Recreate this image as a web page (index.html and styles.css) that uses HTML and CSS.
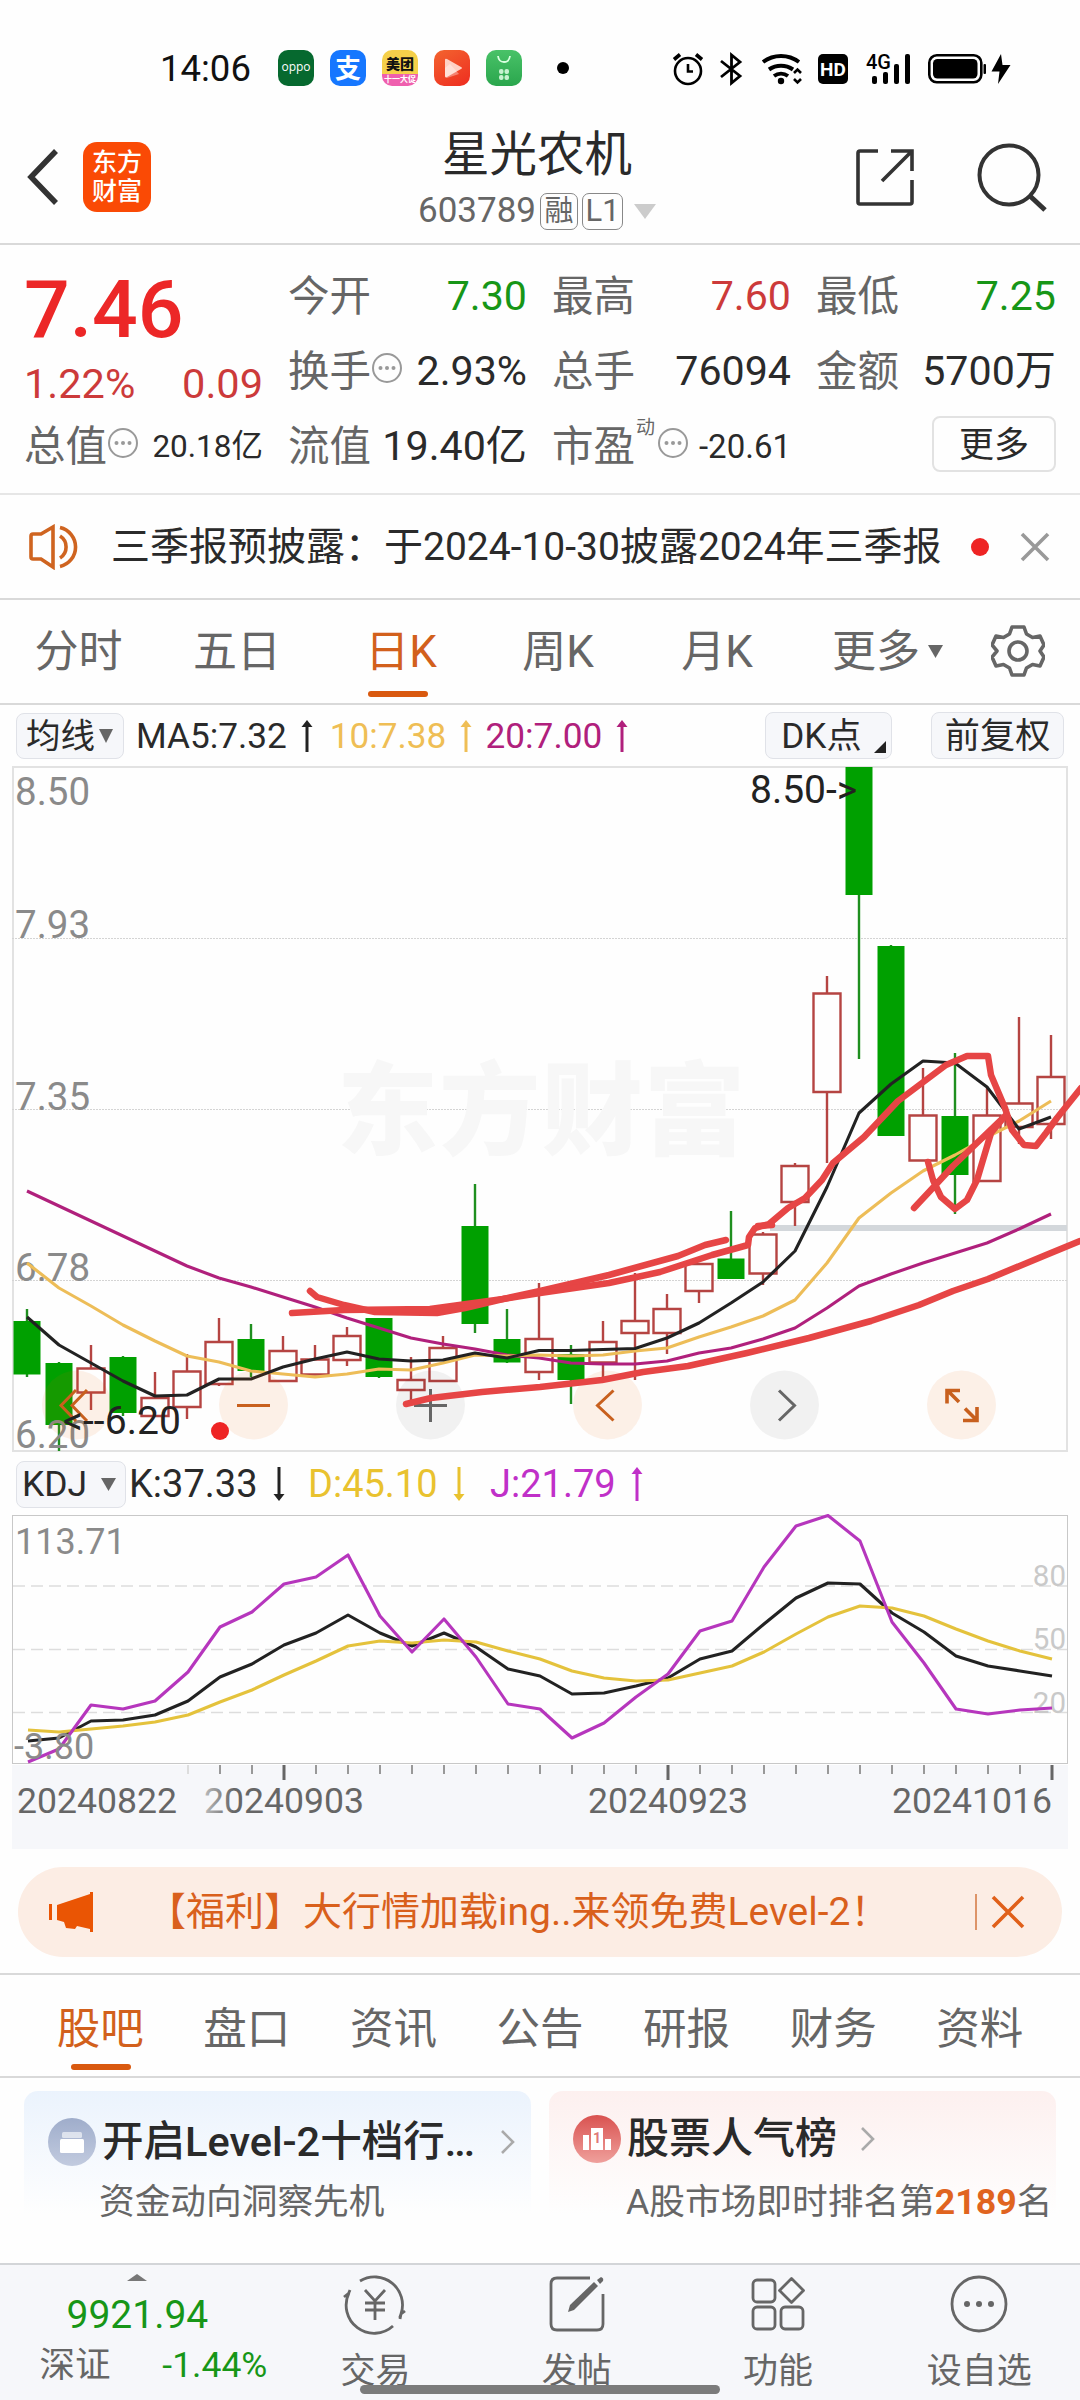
FILE: index.html
```html
<!DOCTYPE html>
<html lang="zh-CN">
<head>
<meta charset="utf-8">
<title>星光农机 603789</title>
<link rel="stylesheet" href="styles.css">
</head>
<body>
<div class="status">
  <span class="clock">14:06</span>
  <div class="apps">
    <span class="app app-oppo">oppo</span>
    <span class="app app-pay">支</span>
    <span class="app app-mt"><b>美团</b><i>十一大促</i></span>
    <span class="app app-video"><svg width="36" height="36" viewBox="0 0 36 36"><path d="M11 10v16q0 2 2 1l14-8q2-1 0-2l-14-8q-2-1-2 1z" fill="#ffd0c4"/><path d="M11 18l5-4 9 10-12 4q-2 0-2-2z" fill="#fff" opacity=".35"/></svg></span>
    <span class="app app-shop"><svg width="36" height="36" viewBox="0 0 36 36"><path d="M12 6c1 8 11 8 12 0" fill="none" stroke="#d9ffe0" stroke-width="1.8"/><g fill="#c5f3cf"><rect x="13" y="19" width="4.5" height="5" rx="2"/><rect x="18.500" y="19" width="4.500" height="5" rx="2"/><rect x="13" y="25" width="4.500" height="5" rx="2"/><rect x="18.500" y="25" width="4.500" height="5" rx="2"/></g></svg></span>
  </div>
  <span class="dot-black"></span>
  <svg class="sys" width="345" height="40" viewBox="672 49 345 40">
    <g fill="none" stroke="#000" stroke-width="2.6">
      <circle cx="688" cy="71" r="13"/><path d="M688 64v7.500h5"/><path d="M674 59.500l6-5M702 59.500l-6-5" stroke-width="3.600"/>
      <path d="M721 61l19 15-8.500 7V55l8.500 7-19 15" stroke-width="2.800"/>
      <path d="M763 62a30 30 0 0 1 36 0" stroke-width="4"/><path d="M769 69.500a21 21 0 0 1 24 0" stroke-width="4"/><path d="M774 76a12 12 0 0 1 14 0" stroke-width="4"/>
      <path d="M794 73l3.500-3.500 3.500 3.500M794 79l3.500 3.500 3.500-3.500"/>
      <rect x="929.300" y="55.300" width="52" height="27" rx="7.500"/>
    </g>
    <circle cx="781" cy="81" r="3.200"/>
    <rect x="818" y="54" width="30" height="30" rx="5"/>
    <text class="hd" x="833" y="76" text-anchor="middle">HD</text>
    <text class="g4" x="866" y="69">4G</text>
    <rect x="872" y="76" width="5" height="8" rx="2"/><rect x="883" y="72" width="5" height="12" rx="2"/><rect x="894" y="64" width="5" height="20" rx="2"/><rect x="905" y="54" width="5" height="30" rx="2"/>
    <rect x="933" y="59" width="44.500" height="19.500" rx="4.500"/><rect x="983.500" y="64" width="2.500" height="10" rx="1"/>
    <path d="M1001 54l-9.500 17.500h8l-1.500 12.500 12.500-19h-8z"/>
  </svg>
</div>

<header class="head">
  <svg class="back" width="34" height="58" viewBox="0 0 34 58"><path d="M31 3L6 29l25 26" fill="none" stroke="#333" stroke-width="5.500"/></svg>
  <div class="brand"><span>东方</span><span>财富</span></div>
  <div class="title">
    <div class="name">星光农机</div>
    <div class="code"><span>603789</span><span class="tag">融</span><span class="tag tag-l">L1</span><svg width="22" height="15" viewBox="0 0 22 15"><path d="M0 0h22L11 15z" fill="#ccc"/></svg></div>
  </div>
  <svg class="share" width="62" height="62" viewBox="0 0 62 62" fill="none" stroke="#333" stroke-width="3.600"><path d="M24 5H6q-2 0-2 2v49q0 2 2 2h50q2 0 2-2V34"/><path d="M37 5h21v20M57 6L28 35"/></svg>
  <svg class="search" width="72" height="72" viewBox="0 0 72 72" fill="none" stroke="#333" stroke-width="4"><circle cx="33" cy="33" r="29.500"/><path d="M54 54l15 14" stroke-width="5"/></svg>
</header>

<section class="quote">
  <div class="col c1">
    <div class="price">7.46</div>
    <div class="chg"><span>1.22%</span><span>0.09</span></div>
    <div class="row"><label>总值</label><svg class="more" viewBox="0 0 32 32"><use href="#dots"/></svg><span class="v s31">20.18亿</span></div>
  </div>
  <div class="col">
    <div class="row"><label>今开</label><span class="v green">7.30</span></div>
    <div class="row"><label>换手</label><svg class="more" viewBox="0 0 32 32"><use href="#dots"/></svg><span class="v">2.93%</span></div>
    <div class="row"><label>流值</label><span class="v">19.40亿</span></div>
  </div>
  <div class="col">
    <div class="row"><label>最高</label><span class="v red">7.60</span></div>
    <div class="row"><label>总手</label><span class="v">76094</span></div>
    <div class="row"><label>市盈</label><sup>动</sup><svg class="more" viewBox="0 0 32 32"><use href="#dots"/></svg><span class="v s33">-20.61</span></div>
  </div>
  <div class="col">
    <div class="row"><label>最低</label><span class="v green">7.25</span></div>
    <div class="row"><label>金额</label><span class="v">5700万</span></div>
    <div class="row"><span class="btn-more">更多</span></div>
  </div>
</section>
<svg class="defs" width="0" height="0"><defs><g id="dots"><circle cx="16" cy="16" r="14" fill="none" stroke="#999" stroke-width="2"/><g fill="#999"><circle cx="9.500" cy="16" r="2"/><circle cx="16" cy="16" r="2"/><circle cx="22.500" cy="16" r="2"/></g></g></defs></svg>

<section class="notice">
  <svg width="52" height="46" viewBox="0 0 52 46" fill="none" stroke="#cf6420" stroke-width="3.600"><path d="M2 12q0-2 2-2h8L24 3v40L12 35H4q-2 0-2-2z"/><path d="M31 12a13 13 0 0 1 0 22M31 3.500a20 20 0 0 1 0 39"/></svg>
  <span class="ntext">三季报预披露：于2024-10-30披露2024年三季报</span>
  <span class="ndot"></span>
  <svg width="30" height="30" viewBox="0 0 30 30"><path d="M2 2l26 26M28 2L2 28" stroke="#999" stroke-width="3.600"/></svg>
</section>

<nav class="tabs">
  <span class="t1">分时</span><span class="t2">五日</span><span class="t3 on">日K</span><span class="t4">周K</span><span class="t5">月K</span>
  <span class="t6">更多<svg width="15" height="13" viewBox="0 0 15 13"><path d="M0 0h15L7.500 13z" fill="#666"/></svg></span>
  <svg class="gear" width="54" height="54" viewBox="-27 -27 54 54" fill="none" stroke="#666" stroke-width="3.600" stroke-linejoin="round"><circle r="9"/><path d="M-6-24H6l2.500 7 6 3.500 7.500-1.500 4 9-4 6v0l4 6-4 9-7.500-1.500-6 3.500L6 24H-6l-2.500-7-6-3.500-7.500 1.500-4-9 5-6-5-6 4-9 7.500 1.500 6-3.500z"/></svg>
</nav>

<div class="mabar">
  <span class="chip chip-ma">均线<svg width="14" height="14" viewBox="0 0 14 14"><path d="M0 0h14L7 14z" fill="#666"/></svg></span>
  <span class="ma ma5">MA5:7.32<svg width="12" height="32" viewBox="0 0 12 32"><path d="M6 4v28" stroke="#222" stroke-width="3"/><path d="M.5 7h11L6 0z" fill="#222"/></svg></span>
  <span class="ma ma10">10:7.38<svg width="12" height="32" viewBox="0 0 12 32"><path d="M6 4v28" stroke="#efbe55" stroke-width="3"/><path d="M.5 7h11L6 0z" fill="#efbe55"/></svg></span>
  <span class="ma ma20">20:7.00<svg width="12" height="32" viewBox="0 0 12 32"><path d="M6 4v28" stroke="#b0207c" stroke-width="3"/><path d="M.5 7h11L6 0z" fill="#b0207c"/></svg></span>
  <span class="chip chip-dk">DK点<svg width="12" height="12" viewBox="0 0 12 12"><path d="M12 0v12H0z" fill="#222"/></svg></span>
  <span class="chip chip-fq">前复权</span>
</div>

<svg class="kchart" width="1080" height="688" viewBox="0 766 1080 688">
  <g fill="none" stroke="#e2e2e2" stroke-width="2"><rect x="13" y="767" width="1054" height="684"/></g>
  <path d="M12 938.500H1068M12 1109.500H1068M12 1280.500H1068" stroke="#d4d4d4" stroke-width="1" stroke-dasharray="2 1"/>
  <text class="wm" x="337" y="1147" textLength="408">东方财富</text>
  <path d="M770 1228H1067" stroke="#d3d7db" stroke-width="6"/>
  <g class="axis"><text x="15" y="805">8.50</text><text x="15" y="938">7.93</text><text x="15" y="1110">7.35</text><text x="15" y="1281">6.78</text></g>
  <path class="gw" d="M27 1309V1377M59 1362V1451M123 1356V1416M251 1324V1377M379 1318V1378M475 1184V1333M507 1309V1363M571 1345V1404M731 1211V1279M859 767V1059M891 945V1136M955 1053V1214"/>
  <path class="gb" d="M13.500 1321h27v53.500h-27zM45.500 1363h27v62h-27zM109.500 1357h27v56h-27zM237.500 1339h27v32h-27zM365.500 1318h27v59h-27zM461.500 1226h27v98h-27zM493.500 1339h27v23.500h-27zM557.500 1354h27v26h-27zM717.500 1258.500h27v20.500h-27zM845.500 767h27v128h-27zM877.500 946h27v190h-27zM941.500 1116h27v59h-27z"/>
  <path class="rc" d="M91 1345v23M91 1393v17M155 1372v26M187 1354v17M187 1407v12M219 1318v24M219 1384v2M283 1336v15M315 1345v14M347 1327v9M347 1360v6M411 1357v23M411 1390v16M443 1336v12M539 1283v56M539 1372v8M603 1321v21M603 1362v16M635 1273v48M635 1333v47M667 1294v15M667 1333v21M699 1291v12M763 1232v2M763 1273v12M795 1163v3M795 1202v24M827 976v17M827 1092v71M923 1068v47M987 1088v27M1019 1017v86M1019 1127v17M1051 1035v42M1051 1124v15"/>
  <path class="rc" d="M77.500 1368.500h27v24h-27zM141.500 1398h27v18h-27zM173.500 1371.500h27v35.500h-27zM205.500 1342h27v42h-27zM269.500 1351h27v30h-27zM301.500 1359.500h27v15h-27zM333.500 1336h27v24h-27zM397.500 1380h27v10h-27zM429.500 1348h27v33h-27zM525.500 1339h27v33h-27zM589.500 1342h27v20.500h-27zM621.500 1321h27v12h-27zM653.500 1309h27v24h-27zM685.500 1264h27v27h-27zM749.500 1234.500h27v39h-27zM781.500 1166h27v36h-27zM813.500 993.500h27v98.500h-27zM909.500 1115.500h27v45h-27zM973.500 1115.500h27v65.500h-27zM1005.500 1103.500h27v23.500h-27zM1037.500 1077h27v47h-27z"/>
  <g class="ln">
    <polyline stroke="#b0207c" points="27,1191 59,1206 91,1221 123,1236 155,1251 187,1266 219,1278 251,1287 283,1297 315,1307 347,1318 379,1328 411,1338 443,1344 475,1349 507,1355 539,1358 571,1363 603,1364 635,1364 667,1361 699,1353 731,1348 763,1339 795,1328 827,1308 859,1286 891,1274 923,1263 955,1253 987,1243 1019,1229 1051,1214"/>
    <polyline stroke="#edbd58" points="27,1263 59,1288 91,1306 123,1325 155,1341 187,1356 219,1362 251,1371 283,1374 315,1377 347,1374 379,1369 411,1370 443,1363 475,1355 507,1356 539,1355 571,1356 603,1355 635,1351 667,1348 699,1337 731,1327 763,1316 795,1300 827,1263 859,1218 891,1193 923,1171 955,1155 987,1137 1019,1121 1051,1101"/>
    <polyline stroke="#222" points="27,1317 59,1345 91,1363 123,1381 155,1396 187,1395 219,1379 251,1379 283,1367 315,1359 347,1352 379,1359 411,1361 443,1360 475,1353 507,1358 539,1350.500 571,1350.500 603,1349.500 635,1348.500 667,1338 699,1323 731,1303 763,1282 795,1251 827,1187 859,1113 891,1084 923,1061 955,1063 987,1087 1019,1129 1051,1117"/>
  </g>
  <g class="axis"><text x="15" y="1448">6.20</text></g>
  <g fill="#eb6100" fill-opacity=".09"><circle cx="76.500" cy="1405" r="34.500"/><circle cx="253.500" cy="1405" r="34.500"/><circle cx="607.500" cy="1405" r="34.500"/><circle cx="961.500" cy="1405" r="34.500"/></g>
  <g fill="#000" fill-opacity=".05"><circle cx="430.500" cy="1405" r="34.500"/><circle cx="784.500" cy="1405" r="34.500"/></g>
  <g fill="none" stroke="#c8601e" stroke-width="3"><path d="M76 1390L61 1405.500l15 15.500M87 1390l-15 15.500 15 15.500M237 1405.500h33M613.500 1390.500l-16 15 16 15"/><path d="M960 1390.500H947v13M948 1391l11 11M963 1420.500h14V1407M976 1419.500l-11-11" stroke-width="3.600"/></g>
  <path d="M430.500 1389v33M414 1405.500h33M779 1390.500l15.500 15-15.500 15" fill="none" stroke="#666" stroke-width="3"/>
  <circle cx="220" cy="1431" r="9" fill="#ee2424"/>
  <text class="mark" x="750" y="803">8.50-&gt;</text>
  <text class="mark" x="63" y="1434" textLength="118">&lt;--6.20</text>
  <g class="pen">
    <path d="M310 1291l7 6 27 8 31 7 62 1 28-5 38-9 37-8 69-16 69-19 27-11 21-5"/>
    <path d="M292 1313l52-3 86-1 73-10 37-6 69-10 51-11 52-17 36-10 1-8 6-9 14-4 19-16 17-10 17-18 11-17 31-26 34-36 24-18 24-18 21-9h21l3 19 14 33 7 22 12 15 12 1 10-13 11-15 24-30"/>
    <path d="M758 1226l14-1"/>
    <path d="M914 1208l15-16 24-26 52-50-14 17-14 47-10 20-12 9-14-12-8-17-5-18"/>
    <path d="M406 1404l25-6 51-6 58-5 62-7 41-8 45-6 59-13 62-15 62-17 48-16 34-14 35-12 58-24 34-14"/>
  </g>
</svg>

<div class="kdjbar">
  <span class="chip chip-kdj">KDJ<svg width="15" height="13" viewBox="0 0 15 13"><path d="M0 0h15L7.500 13z" fill="#666"/></svg></span>
  <span class="kd k">K:37.33<svg width="12" height="34" viewBox="0 0 12 34"><path d="M6 0v30" stroke="#222" stroke-width="3"/><path d="M.5 27h11L6 34z" fill="#222"/></svg></span>
  <span class="kd d">D:45.10<svg width="12" height="34" viewBox="0 0 12 34"><path d="M6 0v30" stroke="#e9c22f" stroke-width="3"/><path d="M.5 27h11L6 34z" fill="#e9c22f"/></svg></span>
  <span class="kd j">J:21.79<svg width="12" height="34" viewBox="0 0 12 34"><path d="M6 4v30" stroke="#c030c8" stroke-width="3"/><path d="M.5 7h11L6 0z" fill="#c030c8"/></svg></span>
</div>

<svg class="kdjchart" width="1080" height="336" viewBox="0 1514 1080 336">
  <rect x="12" y="1765" width="1056" height="84" fill="#f6f7fa"/>
  <rect x="12.500" y="1515.500" width="1055" height="248" fill="none" stroke="#c8c8c8"/>
  <path d="M13 1586H1067M13 1649.500H1067M13 1712.500H1067" stroke="#ddd" stroke-width="1.600" stroke-dasharray="12 6"/>
  <g class="lv"><text x="1066" y="1586">80</text><text x="1066" y="1649">50</text><text x="1066" y="1712.500">20</text></g>
  <g class="ln">
    <polyline stroke="#222" points="28,1741 59,1738 91,1721 123,1720 155,1715 188,1701 220,1677 252,1664 284,1645 316,1633 348,1615 380,1633 412,1646 444,1633 476,1647 508,1669 540,1676 572,1694 604,1693 636,1686 668,1678 700,1659 732,1651 764,1624 796,1598 828,1583 860,1584 892,1613 924,1632 956,1656 988,1666 1020,1671 1052,1676"/>
    <polyline stroke="#e4c23c" points="28,1730 59,1732 91,1729 123,1726 155,1722 188,1715 220,1702 252,1690 284,1675 316,1661 348,1646 380,1641 412,1643 444,1640 476,1642 508,1651 540,1659 572,1671 604,1678 636,1681 668,1680 700,1673 732,1666 764,1652 796,1634 828,1617 860,1606 892,1608 924,1616 956,1629 988,1641 1020,1651 1052,1659"/>
    <polyline stroke="#b636bd" points="28,1762 59,1749 91,1705 123,1709 155,1701 188,1672 220,1627 252,1612 284,1584 316,1577 348,1555 380,1616 412,1652 444,1619 476,1657 508,1704 540,1709 572,1738 604,1723 636,1697 668,1674 700,1631 732,1621 764,1567 796,1526 828,1515.500 860,1541 892,1622 924,1663 956,1709 988,1714 1020,1710 1052,1708"/>
  </g>
  <g class="axis2"><text x="15" y="1554">113.71</text><text x="14" y="1759">-3.80</text></g>
  <path d="M188 1765v9" stroke="#ddd" stroke-width="2"/>
  <path d="M220 1765v9M252 1765v9M316 1765v9M348 1765v9M380 1765v9M412 1765v9M444 1765v9M476 1765v9M508 1765v9M540 1765v9M572 1765v9M604 1765v9M636 1765v9M700 1765v9M732 1765v9M764 1765v9M796 1765v9M828 1765v9M860 1765v9M892 1765v9M924 1765v9M956 1765v9M988 1765v9M1020 1765v9" stroke="#999" stroke-width="2"/>
  <path d="M284 1765v15M668 1765v15M1052 1765v15" stroke="#666" stroke-width="3"/>
  <linearGradient id="fade" gradientUnits="userSpaceOnUse" x1="204" y1="0" x2="234" y2="0"><stop offset="0" stop-color="#bbb"/><stop offset="1" stop-color="#666"/></linearGradient>
  <g class="date"><text x="17" y="1812.500">20240822</text><text x="204" y="1812.500" fill="url(#fade)">20240903</text><text x="588" y="1812.500">20240923</text><text x="892" y="1812.500">20241016</text></g>
</svg>

<div class="banner">
  <svg width="46" height="42" viewBox="0 0 46 42" fill="#ea5504"><path d="M1 13h3v16H1zM9 14L42 3V1h3v40h-3v-3l-13-3-2 3-9-1-2-6-7-2z"/></svg>
  <span class="btext">【福利】大行情加载ing..来领免费Level-2！</span>
  <span class="bline"></span>
  <svg width="34" height="34" viewBox="0 0 34 34"><path d="M2 2l30 30M32 2L2 32" stroke="#e0601a" stroke-width="3.600"/></svg>
</div>

<nav class="tabs2"><span class="on">股吧</span><span>盘口</span><span>资讯</span><span>公告</span><span>研报</span><span>财务</span><span>资料</span></nav>

<section class="cards">
  <div class="card blue">
    <div class="ct"><svg width="48" height="48" viewBox="0 0 48 48"><defs><linearGradient id="b" x2="0" y2="1"><stop stop-color="#9fadcb"/><stop offset="1" stop-color="#c2cbdf"/></linearGradient></defs><circle cx="24" cy="24" r="24" fill="url(#b)"/><rect x="14" y="14" width="20" height="6" rx="1.500" fill="#fff" opacity=".6"/><rect x="12" y="21" width="24" height="14" rx="1.500" fill="#fff"/></svg><strong>开启Level-2十档行<span class="ell">...</span></strong><svg class="chev" width="14" height="24" viewBox="0 0 14 24"><path d="M1 1l11 11L1 23" fill="none" stroke="#aaa" stroke-width="2.600"/></svg></div>
    <div class="cs">资金动向洞察先机</div>
  </div>
  <div class="card pink">
    <div class="ct"><svg width="48" height="48" viewBox="0 0 48 48"><defs><linearGradient id="r" x2="0" y2="1"><stop stop-color="#d95250"/><stop offset="1" stop-color="#efa09c"/></linearGradient></defs><circle cx="24" cy="24" r="24" fill="url(#r)"/><path d="M10 20h6v15h-6zM18 13h12v22H18zM32 24h6v11h-6z" fill="#fff"/><text class="one" x="24" y="28" text-anchor="middle">1</text></svg><strong>股票人气榜</strong><svg class="chev" width="14" height="24" viewBox="0 0 14 24"><path d="M1 1l11 11L1 23" fill="none" stroke="#aaa" stroke-width="2.600"/></svg></div>
    <div class="cs">A股市场即时排名第<b>2189</b>名</div>
  </div>
</section>

<footer class="dock">
  <div class="index">
    <svg width="20" height="7" viewBox="0 0 20 7"><path d="M0 7h20L10 0z" fill="#777"/></svg>
    <div class="iv">9921.94</div>
    <div class="ir"><span>深证</span><span class="green">-1.44%</span></div>
  </div>
  <div class="item"><svg width="66" height="62" viewBox="-33 -31 66 62" fill="none" stroke="#666" stroke-width="2.800"><path d="M-15-23A28 28 0 0 1 26 10l4-3M26 10l-1 5M18 22A28 28 0 0 1-26-11l-5 4M-25-14l-3 7"/><path d="M-10-14L0-3 10-14M0-3v19M-10-1h20M-10 6h20"/></svg><span>交易</span></div>
  <div class="item"><svg width="66" height="62" viewBox="-33 -31 66 62" fill="none" stroke="#666" stroke-width="2.800"><path d="M13-26h-33q-6 0-6 6v40q0 6 6 6h40q6 0 6-6v-30"/><path d="M-9 8l2-7L17-22l4 4L-3 6z" fill="#666" stroke="none"/><path d="M20-24l4-3q3 1 2 4l-3 3z" fill="#666" stroke="none"/></svg><span>发帖</span></div>
  <div class="item"><svg width="66" height="62" viewBox="-33 -31 66 62" fill="none" stroke="#666" stroke-width="2.800"><rect x="-25" y="-24" width="22" height="22" rx="4"/><path d="M13.500-25.500l12 12-12 12-12-12z" stroke-linejoin="round"/><rect x="-25" y="3" width="22" height="22" rx="4"/><rect x="3" y="3" width="22" height="22" rx="4"/></svg><span>功能</span></div>
  <div class="item"><svg width="66" height="62" viewBox="-33 -31 66 62"><circle r="27" fill="none" stroke="#666" stroke-width="2.800"/><g fill="#666"><circle cx="-12" r="3"/><circle r="3"/><circle cx="12" r="3"/></g></svg><span>设自选</span></div>
  <span class="home"></span>
</footer>
</body>
</html>
```
FILE: styles.css
```css
* { box-sizing: border-box; }
body { margin: 0; width: 1080px; height: 2400px; overflow: hidden; background: #fefefe; font-family: Roboto, "Noto Sans CJK SC", sans-serif; color: #2a2a2a; white-space: nowrap; }
svg { display: block; flex: none; }
.defs { position: absolute; }
.green { color: #179617; }
.red { color: #cc3a3a; }

.status { height: 120px; padding: 16px 63px 0 160px; display: flex; align-items: center; }
.clock { width: 118px; font-size: 36.500px; color: #111; line-height: 40px; padding-top: 2px; }
.apps { display: flex; gap: 16px; }
.app { width: 36px; height: 36px; border-radius: 10px; overflow: hidden; color: #fff; text-align: center; }
.app-oppo { background: #06692f; font: 12px/33px "Open Sans", sans-serif; }
.app-pay { background: #1677ff; font: bold 26px/33px "Noto Sans CJK SC", sans-serif; }
.app-mt { background: linear-gradient(#f5d04a 66%, #ef5fae 66%); display: flex; flex-direction: column; }
.app-mt b { color: #111; font-size: 14px; line-height: 28px; height: 25px; font-weight: 900; }
.app-mt i { font-size: 8px; line-height: 9px; font-style: normal; font-weight: 700; }
.app-video { background: linear-gradient(150deg, #f3642f, #ee2c20); }
.app-shop { background: linear-gradient(#49c268, #2aa64d); }
.dot-black { width: 12px; height: 12px; border-radius: 50%; background: #000; margin-left: 35px; }
.sys { margin-left: auto; margin-top: 2px; }
.hd { fill: #fff; font-size: 19px; font-weight: 700; }
.g4 { font-size: 20px; font-weight: 500; }

.head { height: 125px; border-bottom: 2px solid #d9d9d9; display: flex; align-items: center; padding: 0 32px 0 25px; }
.back { margin-top: -9px; }
.brand { margin: -10px 0 0 24px; width: 68px; height: 70px; background: #fa4a05; border-radius: 14px; color: #fff; font-size: 25px; font-weight: 500; line-height: 29px; display: flex; flex-direction: column; align-items: center; justify-content: center; }
.title { flex: 1; display: flex; flex-direction: column; align-items: center; padding-left: 69px; }
.name { font-size: 47.500px; line-height: 64px; margin-top: -9px; }
.code { display: flex; align-items: center; font-size: 35px; line-height: 40px; color: #666; gap: 4px; margin-top: 4px; }
.tag { width: 38px; height: 37px; border: 1.500px solid #888; border-radius: 7px; font-size: 29px; line-height: 34px; text-align: center; }
.tag-l { width: 41px; font-size: 31px; }
.code svg { margin-left: 7px; }
.share { margin-top: -9px; }
.search { margin: -8px 0 0 60px; }

.quote { height: 250px; border-bottom: 2px solid #e6e6e6; padding: 14px 23px 0 24px; display: grid; grid-template-columns: 239px 239px 239px 240px; column-gap: 25px; }
.row { height: 75px; display: flex; align-items: center; font-size: 41.200px; line-height: 77px; }
.row label { font-size: 41.500px; color: #666; }
.row .v { margin-left: auto; }
.row .s31 { font-size: 31.500px; }
.row .s33 { font-size: 33px; }
.more { width: 32px; height: 32px; margin-top: -7px; }
.row sup { font-size: 19px; line-height: 20px; color: #666; align-self: flex-start; margin: 9px 2px 0 1px; }
.price { height: 98px; line-height: 101px; font-size: 80.500px; font-weight: 500; color: #ec2727; }
.chg { height: 52px; line-height: 54px; font-size: 41.500px; color: #cc3a3a; display: flex; justify-content: space-between; }
.btn-more { margin: 0 0 5px auto; width: 124px; height: 56px; border: 2px solid #e2e2e2; border-radius: 8px; font-size: 35px; line-height: 55px; text-align: center; }

.notice { height: 105px; border-bottom: 2px solid #d9d9d9; display: flex; align-items: center; padding: 0 30px 0 29px; }
.ntext { font-size: 39px; line-height: 60px; margin-left: 30px; }
.ndot { width: 18px; height: 18px; border-radius: 50%; background: #ee2424; margin: 0 31px 0 auto; }

.tabs { height: 105px; border-bottom: 2px solid #d9d9d9; display: flex; align-items: center; font-size: 44px; line-height: 108px; color: #666; text-align: center; }
.t1 { width: 157px; } .t2 { width: 160px; } .t3 { width: 168px; } .t4 { width: 146px; } .t5 { width: 172px; }
.t6 { width: 188px; padding-left: 29px; display: flex; align-items: center; gap: 8px; }
.on { color: #d2601c; position: relative; }
.on::after { content: ""; position: absolute; left: 50%; bottom: 9px; width: 60px; height: 6px; margin-left: -33px; border-radius: 3px; background: #d9590f; }
.gear { margin-top: -2px; }

.mabar { height: 61px; display: flex; align-items: center; font-size: 35.200px; line-height: 46px; padding: 0 16px; }
.chip { border: 1.500px solid #e0e2e8; border-radius: 8px; background: #f6f7fa; display: flex; align-items: center; }
.chip-ma { width: 108px; height: 46px; padding-left: 9px; gap: 4px; font-size: 34.500px; margin-right: 12px; }
.ma { display: flex; align-items: center; gap: 14px; }
.ma5 { width: 194px; } .ma10 { width: 156px; } .ma20 { width: 280px; }
.ma10 { color: #efbe55; } .ma20 { color: #b0207c; }
.chip-dk { width: 127px; height: 47px; padding-left: 15px; gap: 12px; margin-right: 39px; }
.chip-dk svg { margin-top: 22px; }
.chip-fq { width: 133px; height: 47px; justify-content: center; }

.axis text { font-size: 38.500px; fill: #8a8a8a; }
.mark { font-size: 39px; fill: #222; }
.wm { font-size: 101px; font-weight: 900; fill: #f7f7f7; }
.gw { stroke: #1f8f1f; stroke-width: 2.400; }
.gb { fill: #00a000; }
.rc { fill: none; stroke: #b54442; stroke-width: 2.400; }
.ln polyline { fill: none; stroke-width: 3.100; stroke-linejoin: round; }
.pen path { fill: none; stroke: #e64545; stroke-width: 6.500; stroke-linecap: round; stroke-linejoin: round; }

.kdjbar { height: 60px; display: flex; align-items: center; padding-left: 16px; font-size: 38px; line-height: 46px; }
.chip-kdj { width: 110px; height: 47px; font-size: 35.500px; padding-left: 5px; gap: 14px; margin-right: 3px; }
.kd { display: flex; align-items: center; gap: 15px; }
.k { width: 179px; } .d { width: 182px; color: #e9c22f; } .j { color: #c030c8; }
.lv text { font-size: 29.500px; fill: #c9c9c9; text-anchor: end; }
.axis2 text { font-size: 36px; fill: #8a8a8a; }
.date { font-size: 35.600px; fill: #666; }

.banner { margin: 17px 18px 0; height: 90px; border-radius: 45px; background: #fcede4; display: flex; align-items: center; padding: 0 37px 0 30px; color: #d9601c; }
.btext { font-size: 39px; line-height: 60px; margin-left: 53px; }
.bline { width: 2px; height: 36px; background: #dd9468; margin: 0 14px 0 auto; }

.tabs2 { margin-top: 16px; height: 105px; border-top: 2px solid #d9d9d9; border-bottom: 2px solid #d9d9d9; padding: 0 27px; display: flex; font-size: 43.500px; line-height: 110px; color: #666; text-align: center; }
.tabs2 span { flex: 1; height: 101px; }
.tabs2 .on { color: #d2601c; }
.tabs2 .on::after { bottom: 6px; margin-left: -29px; }

.cards { height: 185px; padding: 13px 24px 0; display: flex; gap: 18px; }
.card { flex: 1; min-width: 0; height: 130px; border-radius: 14px 14px 0 0; padding: 22px 0 0 24px; }
.blue { background: linear-gradient(#ebf3fd, #fefefe 95%); }
.pink { background: linear-gradient(#fdf0ef, #fefefe 95%); }
.ct { display: flex; align-items: center; height: 58px; }
.pink .ct { height: 52px; }
.ct strong { font-size: 42px; font-weight: 500; line-height: 60px; margin-left: 6px; }
.blue .ct strong { font-size: 41.500px; }
.ell { letter-spacing: -2px; }
.blue .ct { width: 467px; }
.blue .chev { margin-left: auto; }
.pink .chev { margin-left: 24px; }
.cs { font-size: 35.700px; line-height: 54px; color: #666; margin-left: 51px; margin-top: 4px; }
.pink .cs { margin-left: 53px; margin-top: 10px; }
.cs b { color: #e0641f; font-weight: 700; }
.one { font-size: 14px; font-weight: 700; fill: #e07a77; }

.dock { height: 137px; border-top: 2px solid #d3d5d8; background: #f6f7fa; display: flex; position: relative; color: #666; }
.index { width: 275px; display: flex; flex-direction: column; align-items: center; padding-top: 9px; }
.iv { font-size: 39px; line-height: 50px; color: #179617; margin-top: 9px; }
.ir { width: 228px; margin-left: 32px; display: flex; justify-content: space-between; font-size: 35.500px; line-height: 50px; }
.item { width: 201.500px; display: flex; flex-direction: column; align-items: center; font-size: 35px; line-height: 50px; padding-top: 8px; }
.item span { margin-top: 12px; }
.home { position: absolute; left: 360px; top: 120px; width: 360px; height: 9px; border-radius: 5px; background: #7b7b7b; }
```
